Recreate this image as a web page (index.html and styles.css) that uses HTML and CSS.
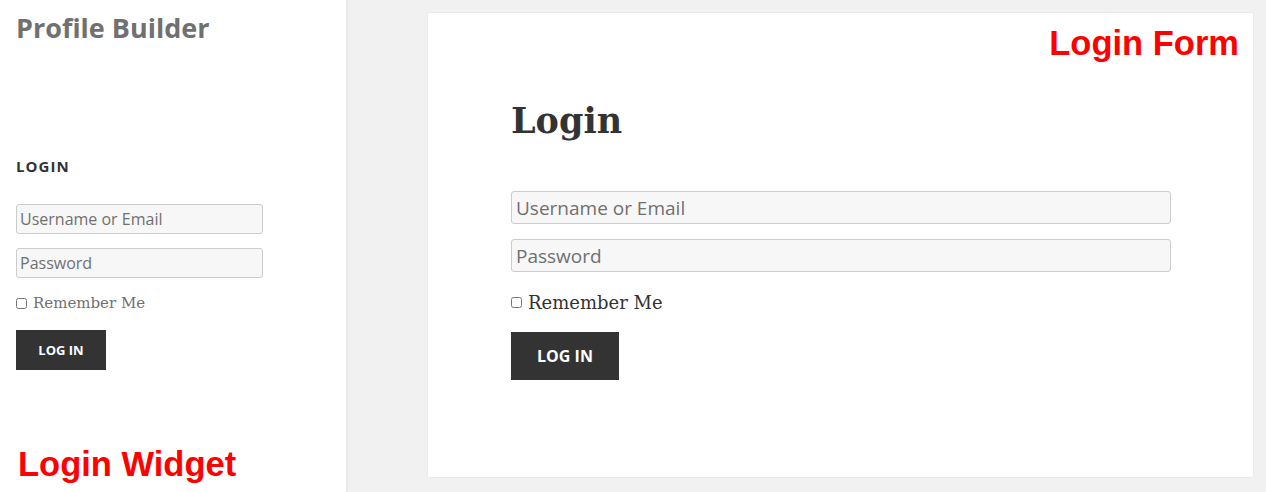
FILE: index.html
```html
<!DOCTYPE HTML>
<html>
<head>
<meta charset="utf-8">
<title>Profile Builder - Login</title>
<link rel="stylesheet" href="styles.css">
</head>
<body>
	<div class="sidebar">
		<div class="siteTitle">Profile Builder</div>

		<div class="widget">
			<h2 class="widgetTitle">Login</h2>
			<form class="loginForm small">
				<input type="text" placeholder="Username or Email">
				<input type="password" placeholder="Password">
				<label class="remember"><input type="checkbox"> Remember Me</label>
				<button type="button">Log In</button>
			</form>
		</div>

		<div class="note noteWidget">Login Widget</div>
	</div>

	<div class="content">
		<div class="card">
			<div class="note noteForm">Login Form</div>
			<h1 class="pageTitle">Login</h1>
			<form class="loginForm large">
				<input type="text" placeholder="Username or Email">
				<input type="password" placeholder="Password">
				<label class="remember"><input type="checkbox"> Remember Me</label>
				<button type="button">Log In</button>
			</form>
		</div>
	</div>
</body>
</html>
```

FILE: styles.css
```css
* {
	margin: 0;
	padding: 0;
	box-sizing: border-box;
}

html, body {
	height: 100%;
}

body {
	display: flex;
	background: #f1f1f1;
	font-family: "Open Sans", "Noto Sans", sans-serif;
	color: #333;
	overflow: hidden;
}

/**** 侧边栏 *****/
.sidebar {
	width: 348px;
	flex: none;
	background: #fff;
	border-right: 2px solid #e9e9e9;
	padding: 10px 16px 0;
	display: flex;
	flex-direction: column;
}

.siteTitle {
	font-size: 27px;
	font-weight: 700;
	line-height: 36px;
	color: #707070;
}

.widget {
	margin-top: 110px;
}

.widgetTitle {
	font-size: 15px;
	font-weight: 700;
	text-transform: uppercase;
	letter-spacing: 0.07em;
	line-height: 20px;
	color: #333;
}

/**** 登录表单 *****/
.loginForm {
	display: flex;
	flex-direction: column;
	align-items: flex-start;
}

.loginForm input[type=text],
.loginForm input[type=password] {
	width: 100%;
	background: #f7f7f7;
	border: 1px solid #ccc;
	border-radius: 3px;
	font-family: "Open Sans", "Noto Sans", sans-serif;
	color: #333;
	outline: none;
}

.loginForm input::placeholder {
	color: #707070;
}

.loginForm .remember {
	display: flex;
	align-items: center;
	font-family: "DejaVu Serif", "Liberation Serif", serif;
}

.loginForm .remember input {
	width: 11px;
	height: 11px;
	margin-right: 6px;
}

.loginForm button {
	background: #333;
	color: #fff;
	border: 0;
	font-family: "Open Sans", "Noto Sans", sans-serif;
	font-weight: 700;
	text-transform: uppercase;
}

.small {
	width: 247px;
	margin-top: 28px;
}

.small input[type=text],
.small input[type=password] {
	height: 30px;
	padding: 0 3px;
	font-size: 16px;
	margin-bottom: 14px;
}

.small .remember {
	font-size: 15px;
	color: #707070;
	margin-top: 2px;
}

.small button {
	width: 90px;
	height: 40px;
	font-size: 13px;
	margin-top: 18px;
}

.note {
	color: #f00;
	font-family: "Liberation Sans", Arial, sans-serif;
	font-weight: 700;
	font-size: 34.5px;
	line-height: 38px;
}

.noteWidget {
	margin-top: auto;
	margin-bottom: 9px;
	padding-left: 2px;
}

/**** 主内容 *****/
.content {
	flex: 1;
	padding: 13px 13px 15px 80px;
}

.card {
	position: relative;
	height: 100%;
	background: #fff;
	box-shadow: 0 0 1px rgba(0, 0, 0, 0.15);
	padding: 84px 82px 0 83px;
}

.noteForm {
	position: absolute;
	top: 11px;
	right: 14px;
}

.pageTitle {
	font-family: "DejaVu Serif", "Liberation Serif", serif;
	font-size: 35px;
	line-height: 48px;
	font-weight: 700;
	color: #333;
}

.large {
	margin-top: 46px;
}

.large input[type=text],
.large input[type=password] {
	height: 33px;
	padding: 0 4px;
	font-size: 19px;
	margin-bottom: 15px;
}

.large .remember {
	font-size: 18px;
	color: #333;
	margin-top: 5px;
}

.large button {
	width: 108px;
	height: 48px;
	font-size: 16px;
	margin-top: 19px;
}
```
